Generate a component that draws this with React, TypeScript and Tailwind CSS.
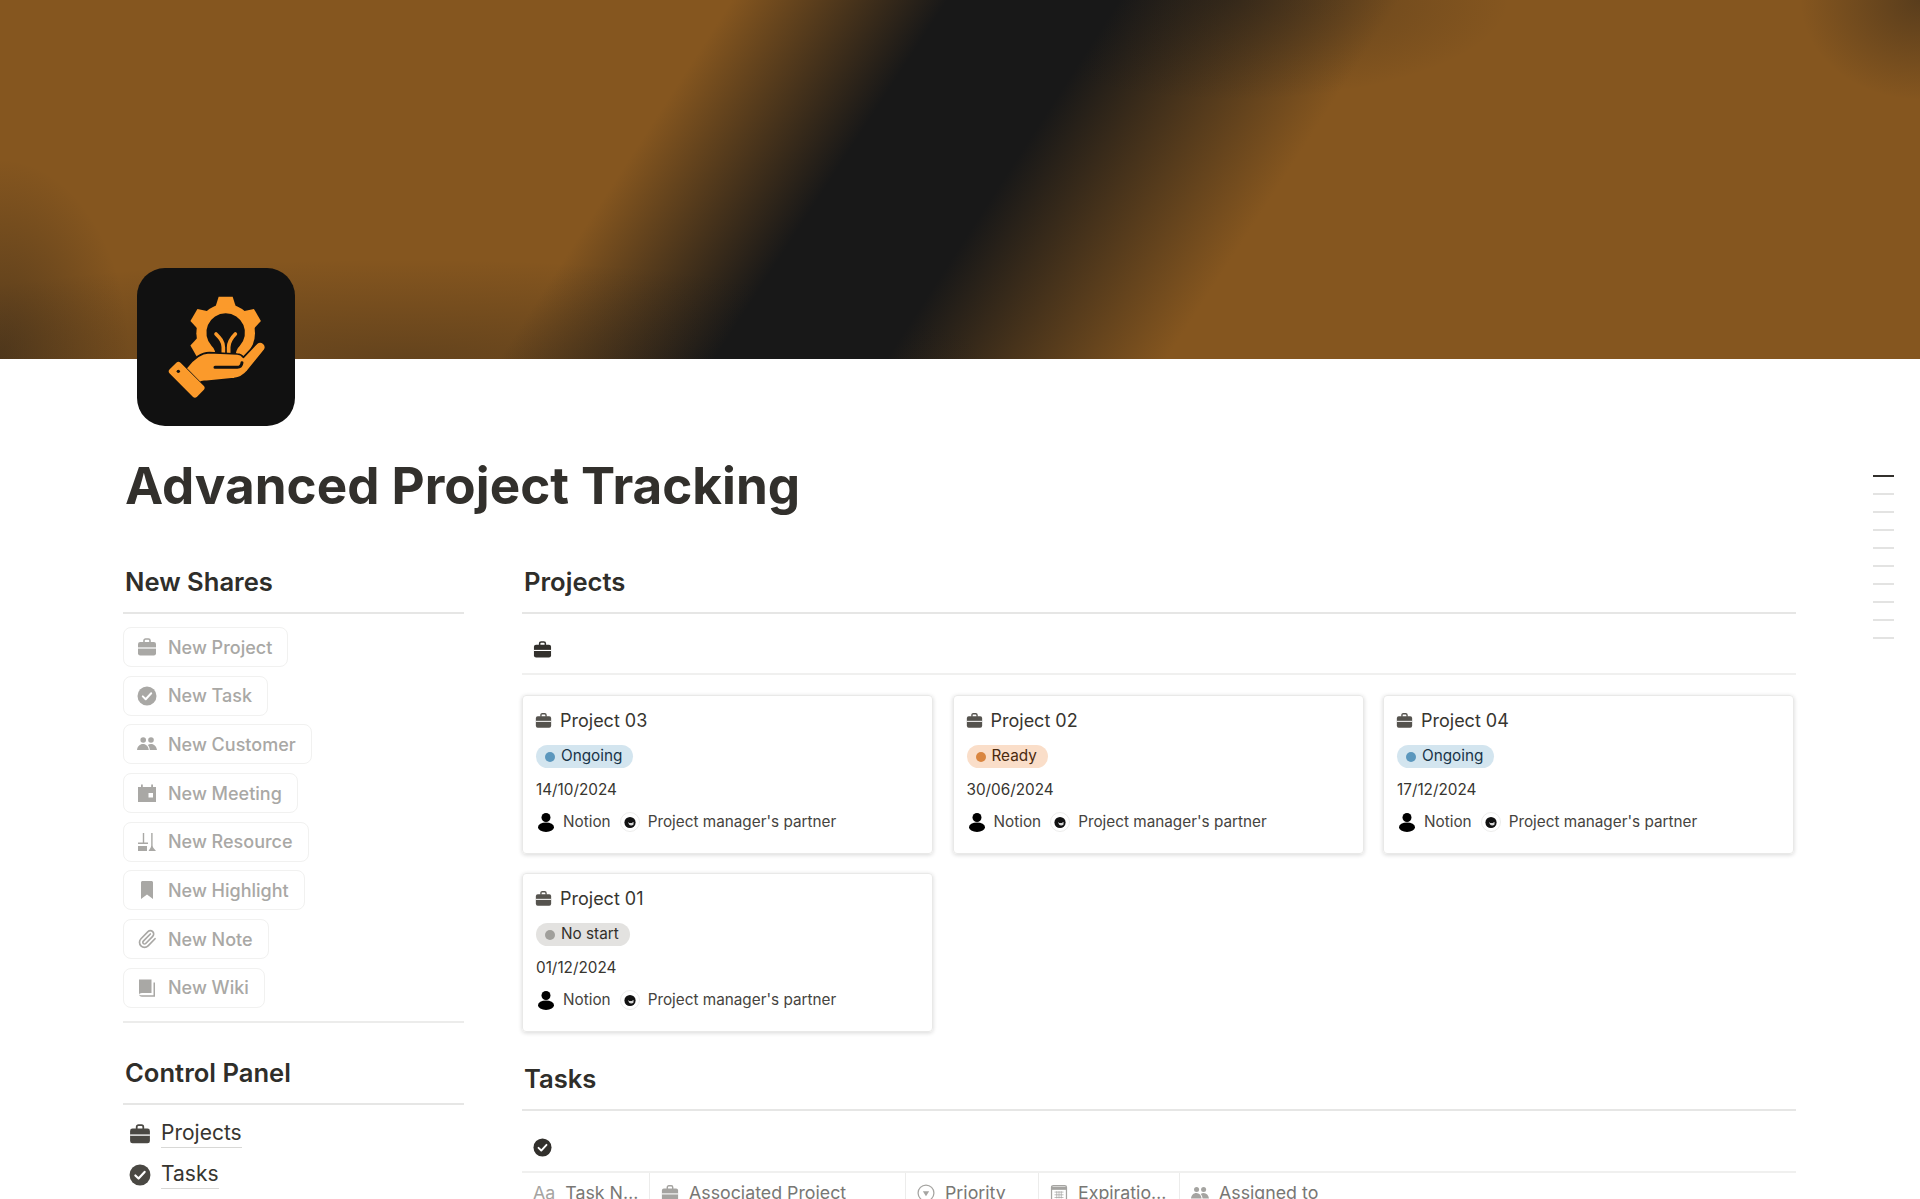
import { Paperclip } from "lucide-react";

type IconProps = { className?: string };

function BriefcaseIcon({ className }: IconProps) {
  return (
    <svg viewBox="0 0 20 20" className={className} fill="currentColor">
      <path d="M7 5.500V3.600C7 2.700 7.700 2 8.600 2h2.800c.9 0 1.600.7 1.600 1.600v1.900" fill="none" stroke="currentColor" strokeWidth="1.600" />
      <rect x="1" y="5" width="18" height="13.500" rx="2.200" />
      <path d="M1 11h18" stroke="#fff" strokeWidth="1.200" />
    </svg>
  );
}

function CheckCircleIcon({ className }: IconProps) {
  return (
    <svg viewBox="0 0 20 20" className={className}>
      <circle cx="10" cy="10" r="9.500" fill="currentColor" />
      <path d="M5.800 10.400l2.900 2.800 5.500-6" fill="none" stroke="#fff" strokeWidth="2" strokeLinecap="round" strokeLinejoin="round" />
    </svg>
  );
}

function PeopleIcon({ className }: IconProps) {
  return (
    <svg viewBox="0 0 20 20" className={className} fill="currentColor">
      <circle cx="6.200" cy="6" r="2.800" />
      <circle cx="14" cy="6" r="2.800" />
      <path d="M0 16c.3-3.600 2.800-6 6-6s5.300 2.400 5.800 6z" />
      <path d="M12.800 16c-.1-2-.8-3.800-2-5 1-.7 2-1 3.200-1 3.200 0 5.500 2.400 6 6z" />
    </svg>
  );
}

function CalendarIcon({ className }: IconProps) {
  return (
    <svg viewBox="0 0 20 20" className={className} fill="currentColor">
      <path d="M1 4h18v15H1z" />
      <path d="M4 1.500h1.800V5H4zM14.200 1.500H16V5h-1.800z" />
      <rect x="11.500" y="10" width="4.500" height="4.500" fill="#fff" />
    </svg>
  );
}

function ResourceIcon({ className }: IconProps) {
  return (
    <svg viewBox="0 0 20 20" className={className} fill="currentColor">
      <path d="M5.800 1h1.400v9.500H11V12H1v-1.500h4.800z" />
      <path d="M1 14h9v5H1z" />
      <path d="M14.200 1h1.400v12.500c0 2 1.800 3.200 3.400 5.500h-7.500c1.200-2 2.700-3.500 2.700-5.500z" />
    </svg>
  );
}

function BookmarkIcon({ className }: IconProps) {
  return (
    <svg viewBox="0 0 20 20" className={className} fill="currentColor">
      <path d="M4 2.500C4 1.700 4.700 1 5.500 1h9c.8 0 1.500.7 1.500 1.500V19l-6-4.500L4 19z" />
    </svg>
  );
}

function BookIcon({ className }: IconProps) {
  return (
    <svg viewBox="0 0 20 20" className={className} fill="currentColor">
      <path d="M2 1.500h12.500V15H5c-1.700 0-3 1-3 1.500z" />
      <path d="M2 16c0 1.500 1.200 2.800 3 2.800h13V4.500h-1.500v12.800H5c-1.500 0-3-.2-3-1.300z" />
    </svg>
  );
}

function PriorityIcon({ className }: IconProps) {
  return (
    <svg viewBox="0 0 20 20" className={className}>
      <circle cx="10" cy="10" r="8.800" fill="none" stroke="currentColor" strokeWidth="1.400" />
      <path d="M6.500 8h7L10 13.500z" fill="currentColor" />
    </svg>
  );
}

function CalendarGridIcon({ className }: IconProps) {
  return (
    <svg viewBox="0 0 20 20" className={className}>
      <rect x="1.700" y="1.700" width="16.600" height="16.600" rx="2" fill="none" stroke="currentColor" strokeWidth="1.400" />
      <path d="M2 3h16v3.500H2z" fill="currentColor" />
      <path d="M5 9h10M5 12h10M5 15h10M7.500 8v8M10 8v8M12.500 8v8" stroke="currentColor" strokeWidth="0.800" />
    </svg>
  );
}

function Logo() {
  return (
    <svg viewBox="-69 -36 474 474" className="w-full h-full">
      <g fill="#fb9a2b">
        <circle cx="197" cy="160" r="88" />
        {[0, -60, 60, -120].map((deg) => (
          <polygon key={deg} points="165,85 176,50 218,50 229,85" transform={`rotate(${deg} 197 160)`} />
        ))}
      </g>
      <path d="M197 100a58 58 0 0 1 42 98c-8 8-12 18-12 30h-60c0-12-4-22-12-30a58 58 0 0 1 42-98z" fill="#111111" />
      <path d="M190 228v-26c0-18-10-28-22-40M206 228v-26c0-18 8-28 20-40" fill="none" stroke="#fb9a2b" strokeWidth="11" strokeLinecap="round" />
      <path
        d="M78 265C98 238 120 218 148 218L232 222C240 222 246 226 250 232L290 190C304 178 324 196 313 211L262 274C250 288 238 294 222 296L140 304C132 305 126 302 120 308Z"
        fill="#fb9a2b"
        stroke="#111111"
        strokeWidth="5"
        strokeLinejoin="round"
      />
      <path d="M165 262H232C240 262 245 256 246 248" fill="none" stroke="#111111" strokeWidth="9" strokeLinecap="round" />
      <rect x="22" y="276" width="116" height="46" rx="9" transform="rotate(45 80 299)" fill="#fb9a2b" />
      <circle cx="55" cy="274" r="5" fill="#111111" />
    </svg>
  );
}

function PersonAvatar() {
  return (
    <svg viewBox="0 0 20 20" className="w-5 h-5 shrink-0">
      <circle cx="10" cy="5.500" r="4.500" fill="#000" />
      <ellipse cx="10" cy="15.200" rx="8" ry="4.800" fill="#000" />
    </svg>
  );
}

function FaceAvatar() {
  return (
    <svg viewBox="0 0 20 20" className="w-5 h-5 shrink-0">
      <circle cx="10" cy="10" r="9.500" fill="#fff" stroke="#ededec" />
      <circle cx="10" cy="10.500" r="5.600" fill="#111" />
      <path d="M8 10h5.500v2.500c-1 1.300-3.500 1.300-4.500 0z" fill="#d8d8d8" />
      <path d="M8.500 10.500h4" stroke="#111" strokeWidth="1" />
    </svg>
  );
}

const shares = [
  { label: "New Project", Icon: BriefcaseIcon },
  { label: "New Task", Icon: CheckCircleIcon },
  { label: "New Customer", Icon: PeopleIcon },
  { label: "New Meeting", Icon: CalendarIcon },
  { label: "New Resource", Icon: ResourceIcon },
  { label: "New Highlight", Icon: BookmarkIcon },
  { label: "New Note", Icon: Paperclip },
  { label: "New Wiki", Icon: BookIcon },
];

const projects = [
  { name: "Project 03", status: "Ongoing", pill: "bg-[#d3e5ef] text-[#183347]", dot: "bg-[#5b97bd]", date: "14/10/2024" },
  { name: "Project 02", status: "Ready", pill: "bg-[#fadec9] text-[#49290e]", dot: "bg-[#d9853f]", date: "30/06/2024" },
  { name: "Project 04", status: "Ongoing", pill: "bg-[#d3e5ef] text-[#183347]", dot: "bg-[#5b97bd]", date: "17/12/2024" },
  { name: "Project 01", status: "No start", pill: "bg-[#e3e2e0] text-[#32302c]", dot: "bg-[#a09f9b]", date: "01/12/2024" },
];

const columns = [
  { label: "Task Name", width: "w-[128px]", Icon: null },
  { label: "Associated Project", width: "w-[256px]", Icon: BriefcaseIcon },
  { label: "Priority", width: "w-[133px]", Icon: PriorityIcon },
  { label: "Expiration Date", width: "w-[141px]", Icon: CalendarGridIcon },
  { label: "Assigned to", width: "w-[200px]", Icon: PeopleIcon },
];

function SectionHeading({ title, className }: { title: string; className?: string }) {
  return (
    <div className={className}>
      <h2 className="pl-[2px] h-9 leading-9 text-[25.600px] font-semibold text-[#2f2e2a]">{title}</h2>
      <div className="mt-[12px] h-[2px] bg-[#e6e6e5]" />
    </div>
  );
}

function ProjectCard({ project }: { project: (typeof projects)[number] }) {
  return (
    <div className="h-[159px] rounded-[4px] border border-[#e9e9e8] shadow-[0_1px_4px_rgba(15,15,15,0.16)] pl-[13px] pt-[10px]">
      <div className="-ml-[1px] flex items-center h-7 gap-2 text-[18px] text-[#37352f]">
        <BriefcaseIcon className="w-[17px] h-[17px] text-[#55534e]" />
        {project.name}
      </div>
      <div className={`mt-[11px] inline-flex items-center h-[23px] rounded-full pl-[9px] pr-[11px] gap-[6px] text-[15.300px] ${project.pill}`}>
        <span className={`w-[10px] h-[10px] rounded-full ${project.dot}`} />
        {project.status}
      </div>
      <div className="mt-[10px] leading-6 text-[15.300px] text-[#37352f]">{project.date}</div>
      <div className="mt-[8px] flex items-center h-6 text-[15.300px] text-[#45433e]">
        <PersonAvatar />
        <span className="ml-[7px]">Notion</span>
        <span className="ml-[9px]">
          <FaceAvatar />
        </span>
        <span className="ml-2">Project manager's partner</span>
      </div>
    </div>
  );
}

export default function App() {
  return (
    <div className="relative h-[1199px] overflow-hidden bg-white font-[Inter,sans-serif] text-[#37352f]">
      <div className="h-[359px] bg-[image:radial-gradient(ellipse_130px_200px_at_0_100%,rgba(24,24,24,0.45),transparent),radial-gradient(ellipse_600px_100px_at_400px_100%,rgba(24,24,24,0.3),transparent),radial-gradient(ellipse_280px_100px_at_1230px_0,rgba(24,24,24,0.35),transparent),radial-gradient(ellipse_120px_100px_at_100%_0,rgba(24,24,24,0.4),transparent),linear-gradient(123deg,#85561f_34%,#181818_44%,#181818_52%,#85561f_65%)]" />

      <div className="ml-[123px] w-[1673px]">
        <div className="ml-[14px] -mt-[91px] relative w-[158px] h-[158px] rounded-[28px] bg-[#111111] overflow-hidden">
          <Logo />
        </div>

        <h1 className="mt-[29px] pl-[2px] h-[60px] leading-[60px] text-[51.200px] font-bold text-[#32302c]">
          Advanced Project Tracking
        </h1>

        <div className="mt-[49px] flex gap-[58px]">
          <aside className="w-[341px] shrink-0">
            <SectionHeading title="New Shares" />
            <div className="mt-[13px] flex flex-col items-start gap-[8.700px]">
              {shares.map(({ label, Icon }) => (
                <div
                  key={label}
                  className="flex items-center h-10 pl-[13px] pr-[15px] gap-[11px] rounded-lg border border-[#f1f1f0] text-[18px] font-medium text-[#a9a8a5]"
                >
                  <Icon className="w-5 h-5" />
                  {label}
                </div>
              ))}
            </div>
            <div className="mt-[13px] h-[2px] bg-[#ececeb]" />

            <SectionHeading title="Control Panel" className="mt-[32px]" />
            <div className="mt-[12px] flex flex-col gap-[7px]">
              <div className="flex items-center h-[34px] pl-[6px] gap-[10px] text-[21px] text-[#37352f]">
                <BriefcaseIcon className="w-[22px] h-[22px] text-[#4a4843]" />
                <span className="border-b border-[#d8d8d6] leading-[28px]">Projects</span>
              </div>
              <div className="flex items-center h-[34px] pl-[6px] gap-[10px] text-[21px] text-[#37352f]">
                <CheckCircleIcon className="w-[22px] h-[22px] text-[#4a4843]" />
                <span className="border-b border-[#d8d8d6] leading-[28px]">Tasks</span>
              </div>
            </div>
          </aside>

          <section className="w-[1274px]">
            <SectionHeading title="Projects" />
            <div className="flex items-start h-[61px] pt-[26px] border-b-2 border-[#f0f0ef] pl-[11px]">
              <BriefcaseIcon className="w-[19px] h-[19px] text-[#32302c]" />
            </div>
            <div className="mt-[20px] grid grid-cols-[repeat(3,411px)] gap-x-[19.500px] gap-y-[19px]">
              {projects.map((project) => (
                <ProjectCard key={project.name} project={project} />
              ))}
            </div>

            <SectionHeading title="Tasks" className="mt-[29px]" />
            <div className="flex items-start h-[62px] pt-[27px] border-b-2 border-[#f0f0ef] pl-[11px]">
              <CheckCircleIcon className="w-[19px] h-[19px] text-[#32302c]" />
            </div>
            <div className="flex h-[40px] text-[17.800px] text-[#787774]">
              {columns.map(({ label, width, Icon }) => (
                <div key={label} className={`flex items-center shrink-0 pl-[11px] pr-[9px] gap-[10px] border-r border-[#ececeb] last:border-r-0 ${width}`}>
                  {Icon ? (
                    <Icon className="w-[18px] h-[18px] shrink-0 text-[#a5a4a1]" />
                  ) : (
                    <span className="shrink-0 text-[#a5a4a1]">Aa</span>
                  )}
                  <span className="truncate">{label}</span>
                </div>
              ))}
            </div>
          </section>
        </div>
      </div>

      <div className="absolute left-[1873px] top-[475px] flex flex-col gap-4">
        {Array.from({ length: 10 }).map((_, i) => (
          <span key={i} className={`block w-[21px] h-[2px] ${i === 0 ? "bg-[#32302c]" : "bg-[#e3e3e2]"}`} />
        ))}
      </div>
    </div>
  );
}
